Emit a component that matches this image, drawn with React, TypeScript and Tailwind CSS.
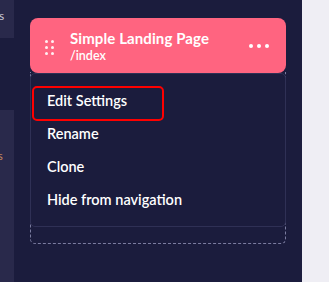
import React from "react";

const items = ["Edit Settings", "Rename", "Clone", "Hide from navigation"];

export default function App() {
  return (
    <div
      className="w-[329px] h-[282px] flex bg-[#1b1c3d] overflow-hidden"
      style={{ fontFamily: "Lato, 'Open Sans', sans-serif" }}
    >
      {/* left strip */}
      <div className="w-[14px] flex flex-col shrink-0">
        <div className="h-[38px] bg-[#29294b] flex items-start pt-[9px] overflow-hidden">
          <span className="text-[12px] leading-[14px] text-[#c9c9d8] ml-[-1px]">s</span>
        </div>
        <div className="h-[72px]" />
        <div className="flex-1 bg-[#29294b] overflow-hidden flex flex-col items-start pt-[40px]">
          <span className="text-[11px] leading-[12px] text-[#c9895f] ml-[-2px]">s</span>
        </div>
      </div>

      {/* main */}
      <div className="flex-1 pt-[18px] pl-[16px]">
        <div className="relative w-[256px]">
          <div className="h-[55px] rounded-[8px] bg-[#ff6480] flex items-center pl-[15px] pr-[17px]">
            <div className="grid grid-cols-2 gap-x-[3px] gap-y-[3px] mr-[16px] mt-[3px]">
              {Array.from({ length: 6 }).map((_, i) => (
                <span key={i} className="w-[3px] h-[3px] rounded-full bg-white/90" />
              ))}
            </div>
            <div className="flex flex-col flex-1 mt-[1px]">
              <span className="text-white font-bold text-[15px] leading-[17px] tracking-[0.1px]">Simple Landing Page</span>
              <span className="text-white font-semibold text-[12.5px] leading-[15px] mt-[1px]">/index</span>
            </div>
            <div className="flex gap-[4px] mt-[1px]">
              <span className="w-[4px] h-[4px] rounded-full bg-white" />
              <span className="w-[4px] h-[4px] rounded-full bg-white" />
              <span className="w-[4px] h-[4px] rounded-full bg-white" />
            </div>
          </div>
          {/* drop zone */}
          <div className="h-[172px] border-[1px] border-dashed border-[#7b7ca0] border-t-0 rounded-b-[5px] -mt-[1px]" />

          {/* dropdown menu */}
          <div className="absolute left-0 right-0 top-[55px] h-[154px] bg-[#1b1c3d] border border-[#2f3055] rounded-[5px] pt-[10px]">
            <div className="absolute left-[1px] top-[12px] w-[132px] h-[35px] border-[2.5px] border-[#ff0000] rounded-[5px]" />
            {items.map((t) => (
              <div key={t} className="h-[33px] flex items-center pl-[16px] text-white text-[14.5px] font-semibold">
                {t}
              </div>
            ))}
          </div>
        </div>
      </div>

      {/* right panel */}
      <div className="w-[27px] bg-[#efeef4] shrink-0" />
    </div>
  );
}
